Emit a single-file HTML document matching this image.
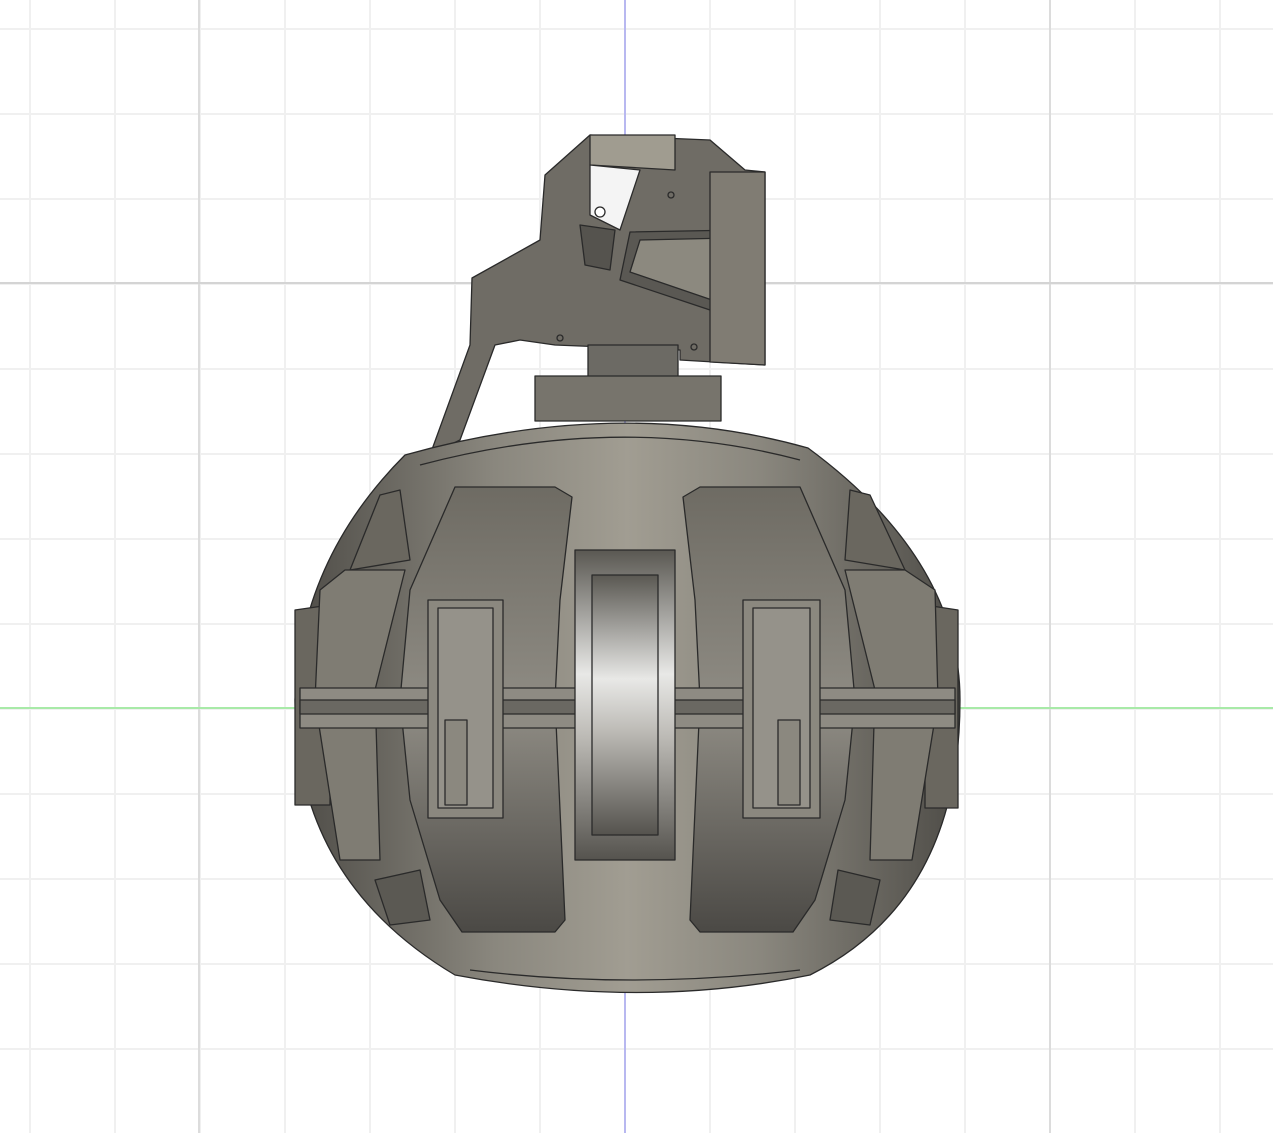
<!DOCTYPE html>
<html><head><style>html,body{margin:0;padding:0;background:#fff;width:1273px;height:1133px;overflow:hidden}</style></head>
<body>
<svg width="1273" height="1133" viewBox="0 0 1273 1133" xmlns="http://www.w3.org/2000/svg">
<defs>
<pattern id="g" x="29" y="28" width="85" height="85" patternUnits="userSpaceOnUse">
<rect x="0" y="0" width="2" height="85" fill="#f0f0f0"/><rect x="0" y="0" width="85" height="2" fill="#f0f0f0"/>
</pattern>
<linearGradient id="body" x1="0" y1="0" x2="0" y2="1">
<stop offset="0" stop-color="#8d897d"/><stop offset="0.5" stop-color="#6f6c64"/><stop offset="1" stop-color="#4a4843"/></linearGradient>
<linearGradient id="hz" x1="0" y1="0" x2="1" y2="0">
<stop offset="0" stop-color="#4e4c47"/><stop offset="0.3" stop-color="#8a877e"/><stop offset="0.5" stop-color="#a19d92"/><stop offset="0.7" stop-color="#8a877e"/><stop offset="1" stop-color="#4e4c47"/></linearGradient>
<linearGradient id="ctr" x1="0" y1="0" x2="0" y2="1">
<stop offset="0" stop-color="#5a5852"/><stop offset="0.4" stop-color="#e8e8e6"/><stop offset="0.6" stop-color="#bdbbb6"/><stop offset="1" stop-color="#55534e"/></linearGradient>
<linearGradient id="seg" x1="0" y1="0" x2="0" y2="1">
<stop offset="0" stop-color="#6e6b63"/><stop offset="0.5" stop-color="#8f8c84"/><stop offset="1" stop-color="#4b4945"/></linearGradient>
</defs>
<rect width="1273" height="1133" fill="#fff"/>
<rect width="1273" height="1133" fill="url(#g)"/>
<rect x="198" y="0" width="2" height="1133" fill="#dcdcdc"/>
<rect x="1049" y="0" width="2" height="1133" fill="#dcdcdc"/>
<rect x="0" y="282" width="1273" height="2" fill="#d4d4d4"/>
<rect x="624" y="0" width="2" height="1133" fill="#b8b8f0"/>
<rect x="0" y="707" width="1273" height="2" fill="#a8eaa8"/>

<g stroke="#2a2a2a" stroke-width="1.3" stroke-linejoin="round">
<!-- lever -->
<path d="M430 455 L470 345 L472 278 L540 240 L545 175 L590 135 L710 140 L745 170 L765 172 L765 365 L680 360 L680 350 L555 345 L520 340 L495 345 L460 440 Z" fill="#6f6c65"/>
<path d="M590 135 L675 135 L675 170 L590 165 Z" fill="#a09c90"/>
<path d="M590 165 L640 170 L620 230 L590 215 Z" fill="#f4f4f4"/>
<path d="M580 225 L615 230 L610 270 L585 265 Z" fill="#55534e"/>
<path d="M630 232 L740 230 L745 300 L710 310 L620 280 Z" fill="#5a5853"/>
<path d="M640 240 L730 238 L735 295 L712 300 L630 272 Z" fill="#8c897f"/>
<path d="M710 172 L765 172 L765 365 L710 362 Z" fill="#807c73"/>
<circle cx="600" cy="212" r="5" fill="#fff"/>
<circle cx="671" cy="195" r="3" fill="none"/>
<circle cx="560" cy="338" r="3" fill="none"/>
<circle cx="694" cy="347" r="3" fill="none"/>
<!-- neck -->
<rect x="588" y="345" width="90" height="35" fill="#6c6a64"/>
<rect x="535" y="376" width="186" height="45" fill="#77746c"/>
<!-- body -->
<path d="M405 455 Q620 395 808 448 Q960 560 960 700 Q960 900 810 975 Q640 1010 455 975 Q295 880 295 700 Q300 560 405 455 Z" fill="url(#hz)"/>
<path d="M420 465 Q620 412 800 460" fill="none"/>
<path d="M470 970 Q630 990 800 970" fill="none"/>
<!-- outer side segments -->
<path d="M380 495 L400 490 L410 560 L350 570 Z" fill="#6a675f"/>
<path d="M850 490 L870 495 L905 570 L845 560 Z" fill="#6a675f"/>
<path d="M295 610 L330 605 L330 805 L295 805 Z" fill="#6a675f"/>
<path d="M925 605 L958 610 L958 808 L925 808 Z" fill="#6a675f"/>
<path d="M320 590 L345 570 L405 570 L375 690 L380 860 L340 860 L315 700 Z" fill="#7f7c73"/>
<path d="M935 590 L905 570 L845 570 L875 690 L870 860 L912 860 L938 700 Z" fill="#7f7c73"/>
<path d="M375 880 L420 870 L430 920 L390 925 Z" fill="#5b5953"/>
<path d="M880 880 L838 870 L830 920 L870 925 Z" fill="#5b5953"/>
<!-- big segments -->
<path d="M455 487 L555 487 L572 497 L560 600 L555 700 L565 920 L555 932 L462 932 L440 900 L410 800 L400 700 L410 590 Z" fill="url(#seg)"/>
<path d="M800 487 L700 487 L683 497 L695 600 L700 700 L690 920 L700 932 L793 932 L815 900 L845 800 L855 700 L845 590 Z" fill="url(#seg)"/>
<!-- pins -->
<rect x="300" y="688" width="655" height="40" fill="#8e8b83"/>
<rect x="300" y="700" width="655" height="14" fill="#6a6862"/>
<!-- blocks -->
<path d="M428 600 L503 600 L503 818 L428 818 Z" fill="#8b887f"/>
<path d="M438 608 L493 608 L493 808 L438 808 Z" fill="#95928a"/>
<rect x="445" y="720" width="22" height="85" fill="#8b887f"/>
<path d="M743 600 L820 600 L820 818 L743 818 Z" fill="#8b887f"/>
<path d="M753 608 L810 608 L810 808 L753 808 Z" fill="#95928a"/>
<rect x="778" y="720" width="22" height="85" fill="#8b887f"/>
<!-- center -->
<rect x="575" y="550" width="100" height="310" fill="url(#ctr)"/>
<rect x="592" y="575" width="66" height="260" fill="url(#ctr)"/>
</g>
</svg>
</body></html>
